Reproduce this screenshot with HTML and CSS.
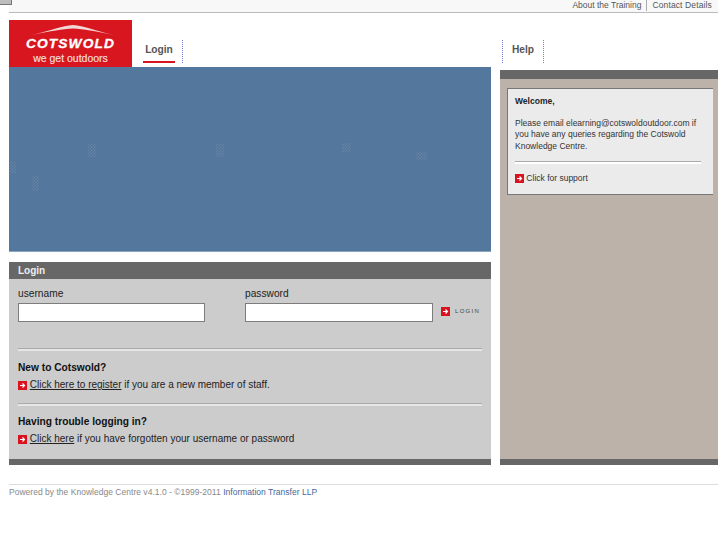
FILE: index.html
```html
<!DOCTYPE html>
<html lang="en">
<head>
<meta charset="utf-8">
<title>Cotswold Knowledge Centre</title>
<link rel="stylesheet" href="styles.css">
</head>
<body>
<div class="corner-btn"></div>
<div class="topbar">
  <a class="toplink">About the Training</a>
  <a class="toplink">Contact Details</a>
</div>
<div class="page">
  <header class="header">
    <div class="header-left">
      <div class="logo">
        <svg class="roof" width="82" height="12" viewBox="0 0 82 12"><path d="M0 11 C20 6 30 2 41 1 C52 2 62 6 81 11 C62 7 52 5 41 4.500 C30 5 20 7 0 11Z" fill="#f3d6d6"/></svg>
        <div class="logo-name">COTSWOLD</div>
        <div class="logo-tag">we get outdoors</div>
      </div>
      <div class="tab tab-active">Login</div>
      <div class="tab-sep"></div>
    </div>
    <div class="header-right">
      <div class="tab-sep"></div>
      <div class="tab tab-help">Help</div>
      <div class="tab-sep"></div>
    </div>
  </header>
  <main class="columns">
    <section class="left">
      <div class="banner">
        <svg class="speckle" width="482" height="184" viewBox="0 0 482 184">
          <defs>
            <pattern id="dots" width="3" height="3" patternUnits="userSpaceOnUse">
              <rect width="1" height="1" fill="#6b84a6"/>
              <rect x="2" y="1" width="1" height="1" fill="#62809f"/>
              <rect x="1" y="2" width="1" height="1" fill="#6b84a6"/>
            </pattern>
          </defs>
          <rect x="79" y="77" width="8" height="13" fill="url(#dots)"/>
          <rect x="207" y="77" width="8" height="13" fill="url(#dots)"/>
          <rect x="333" y="76" width="9" height="9" fill="url(#dots)"/>
          <rect x="407" y="85" width="11" height="8" fill="url(#dots)"/>
          <rect x="1" y="94" width="6" height="12" fill="url(#dots)"/>
          <rect x="23" y="109" width="7" height="15" fill="url(#dots)"/>
        </svg>
      </div>
      <div class="panel">
        <h2 class="panel-title">Login</h2>
        <div class="panel-body">
          <div class="form-row">
            <label class="field field-user">username<input class="input" type="text"></label>
            <label class="field field-pass">password<input class="input" type="password"></label>
            <div class="login-btn">
              <svg class="arrow" width="9" height="9" viewBox="0 0 9 9"><rect width="9" height="9" fill="#d8121f"/><path d="M2 4.500H6.500M4.500 2.500L6.500 4.500L4.500 6.500" stroke="#fff" fill="none" stroke-width="1.200"/></svg>
              <span>LOGIN</span>
            </div>
          </div>
          <hr class="rule rule-first">
          <h3 class="sub">New to Cotswold?</h3>
          <p class="line">
            <svg class="arrow" width="9" height="9" viewBox="0 0 9 9"><rect width="9" height="9" fill="#d8121f"/><path d="M2 4.500H6.500M4.500 2.500L6.500 4.500L4.500 6.500" stroke="#fff" fill="none" stroke-width="1.200"/></svg>
            <a class="link">Click here to register</a> if you are a new member of staff.
          </p>
          <hr class="rule rule-second">
          <h3 class="sub">Having trouble logging in?</h3>
          <p class="line">
            <svg class="arrow" width="9" height="9" viewBox="0 0 9 9"><rect width="9" height="9" fill="#d8121f"/><path d="M2 4.500H6.500M4.500 2.500L6.500 4.500L4.500 6.500" stroke="#fff" fill="none" stroke-width="1.200"/></svg>
            <a class="link">Click here</a> if you have forgotten your username or password
          </p>
        </div>
      </div>
    </section>
    <aside class="right">
      <div class="welcome">
        <p class="welcome-title">Welcome,</p>
        <p class="welcome-text">Please email elearning@cotswoldoutdoor.com if you have any queries regarding the Cotswold Knowledge Centre.</p>
        <hr class="rule rule-box">
        <p class="support">
          <svg class="arrow" width="9" height="9" viewBox="0 0 9 9"><rect width="9" height="9" fill="#d8121f"/><path d="M2 4.500H6.500M4.500 2.500L6.500 4.500L4.500 6.500" stroke="#fff" fill="none" stroke-width="1.200"/></svg>
          Click for support
        </p>
      </div>
    </aside>
  </main>
  <footer class="footer">Powered by the Knowledge Centre v4.1.0 - ©1999-2011 <a class="footer-link">Information Transfer LLP</a></footer>
</div>
</body>
</html>
```
FILE: styles.css
```css
* { box-sizing: border-box; }
html, body { margin: 0; padding: 0; }
body {
  background: #fff;
  font-family: "Liberation Sans", Arial, sans-serif;
  color: #111;
  height: 545px;
  overflow: hidden;
  position: relative;
}
.corner-btn {
  position: absolute;
  left: 0;
  top: 0;
  width: 12px;
  height: 5px;
  background: #bdbdbd;
  border: 1px solid #777;
  border-top: 0;
  border-left: 0;
}
.topbar {
  height: 13px;
  width: 709px;
  margin-left: 9px;
  border-bottom: 1px solid #bbb;
  background: #f8f8f8;
  display: flex;
  justify-content: flex-end;
  align-items: flex-start;
  font-size: 8.500px;
  color: #555;
  line-height: 11px;
}
.toplink { padding: 0 5px 0 5px; height: 11px; }
.toplink + .toplink {
  border-left: 1px solid #aaa;
  padding-right: 6px;
  letter-spacing: 0.130px;
}
.page { width: 709px; margin-left: 9px; }
.header {
  margin-top: 7px;
  height: 47px;
  display: flex;
}
.header-left { width: 491px; display: flex; align-items: flex-end; }
.header-right { display: flex; align-items: flex-end; margin-left: 2px; }
.logo {
  width: 123px;
  height: 47px;
  background: #d8161f;
  position: relative;
  text-align: center;
  color: #fff;
  padding-top: 15px;
}
.roof { position: absolute; left: 23px; top: 4px; }
.logo-name {
  font: italic bold 12.500px/18px "Liberation Sans", Arial, sans-serif;
  letter-spacing: 1px;
  transform: scaleX(1.100);
  -webkit-text-stroke: 0.3px #fff;
}
.logo-tag {
  font-size: 10.500px;
  line-height: 10px;
  color: #f6dcdc;
  -webkit-text-stroke: 0.2px #f6dcdc;
}
.tab {
  font-size: 10.200px;
  font-weight: bold;
  color: #555;
  height: 23px;
  line-height: 20px;
  text-align: center;
  margin-bottom: 4px;
}
.tab-active {
  margin-left: 11px;
  width: 32px;
  border-bottom: 2px solid #d8161f;
}
.tab-help { width: 40px; }
.tab-sep {
  width: 1px;
  height: 23px;
  margin-bottom: 4px;
  border-left: 1px dotted #6f84c4;
}
.tab-active + .tab-sep { margin-left: 7px; }
.columns {
  display: grid;
  grid-template-columns: 482px 218px;
  column-gap: 9px;
  height: 398px;
}
.banner {
  height: 185px;
  background: #54789d;
  border-bottom: 1px solid #8da3bb;
}
.speckle { display: block; }
.panel { margin-top: 10px; }
.panel-title {
  margin: 0;
  height: 17px;
  background: #666766;
  color: #eee;
  font-size: 10px;
  line-height: 17px;
  padding-left: 9px;
}
.panel-body {
  height: 186px;
  background: #cccccc;
  border-bottom: 6px solid #666766;
  padding: 7px 9px 0;
}
.form-row { display: flex; align-items: flex-end; height: 36px; }
.field {
  display: flex;
  flex-direction: column;
  gap: 3px;
  font-size: 10.200px;
  line-height: 12px;
  color: #222;
}
.field-user { width: 227px; }
.input {
  width: 187px;
  height: 19px;
  border: 1px solid #7d7d7d;
  background: #fff;
  padding: 0;
  margin: 0;
  display: block;
}
.field-pass .input { width: 188px; }
.field-pass { width: 196px; }
.login-btn {
  display: flex;
  align-items: center;
  gap: 5px;
  height: 22px;
  font-size: 6px;
  letter-spacing: 1.300px;
  color: #444;
}
.arrow { flex: none; vertical-align: -2px; }
.rule {
  border: 0;
  height: 3px;
  margin: 0;
  border-top: 1px solid #aaa;
  border-bottom: 2px solid #e6e6e6;
}
.rule-first { margin-top: 26px; }
.rule-second { margin-top: 11px; }
.sub {
  margin: 10px 0 0;
  font-size: 10.200px;
  line-height: 13px;
  color: #111;
}
.rule-second + .sub { margin-top: 9px; }
.line {
  margin: 4px 0 0;
  font-size: 10px;
  line-height: 14px;
  color: #222;
}
.link { text-decoration: underline; }
.right {
  margin-top: 3px;
  height: 395px;
  background: #bdb2aa;
  border-top: 9px solid #666766;
  border-bottom: 6px solid #666766;
  padding: 9px 5px 0 7px;
}
.welcome {
  height: 107px;
  background: #ebebeb;
  border: 1px solid #777;
  border-width: 1px 0 1px 1px;
  padding: 7px 12px 0 7px;
  font-size: 8.500px;
  line-height: 11.500px;
  color: #333;
}
.welcome p { margin: 0; }
.welcome-title { font-weight: bold; color: #222; }
.welcome .welcome-text { margin-top: 10px; width: 190px; }
.rule-box { margin-top: 9px; border-top-color: #aaa; border-bottom-color: #fff; }
.welcome .support { margin-top: 9px; }
.footer {
  margin-top: 19px;
  padding-top: 1px;
  border-top: 1px solid #ddd;
  font-size: 8.500px;
  letter-spacing: 0.020px;
  line-height: 12px;
  color: #888;
}
.footer-link { color: #44689a; }
```
